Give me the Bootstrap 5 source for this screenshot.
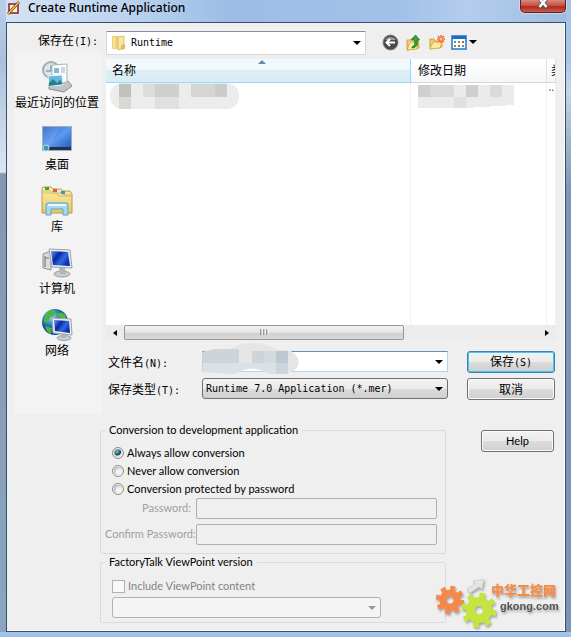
<!DOCTYPE html>
<html lang="zh-CN">
<head>
<meta charset="utf-8">
<meta name="viewport" content="width=device-width, initial-scale=1">
<title>Create Runtime Application</title>
<link href="https://cdn.jsdelivr.net/npm/bootstrap@5.3.0/dist/css/bootstrap.min.css" rel="stylesheet">
<style>
:root{--arrow:url("data:image/svg+xml,%3Csvg xmlns='http://www.w3.org/2000/svg' viewBox='0 0 8 4'%3E%3Cpath d='M0 0h8L4 4z'/%3E%3C/svg%3E");
--arrow-off:url("data:image/svg+xml,%3Csvg xmlns='http://www.w3.org/2000/svg' viewBox='0 0 8 4'%3E%3Cpath fill='%23999' d='M0 0h8L4 4z'/%3E%3C/svg%3E")}
body{font:12px/16px "Noto Sans","Noto Sans CJK SC",sans-serif;color:#000;background:#7f96b2}
.frame{padding:0 5px 5px 6px;background:
 linear-gradient(#a6c5e8,#9dc0e8) bottom/100% 5px no-repeat,
 linear-gradient(#b9cfe9 0,#a9c0dc 60px,#dbe6f1 172px,#8298b2 174px,#8ba5c0 100%) left/6px 100% no-repeat,
 linear-gradient(#a5c3e8 0,#a9c6e6 60px,#c3d5e8 90px,#8096b2 190px,#7e95b1 100%) right/5px 100% no-repeat,
 linear-gradient(90deg,#d4e3f6 0,#bdd4f0 120px,#9dbde6 230px,#a2c1e9 400px,#b4cdec 470px,#9dbbe0 100%)}
.titlebar{height:22px}
.titlebar h1{font-size:12px;line-height:16px}
.close-x{width:46px;height:13px;border:1px solid #5c2325;border-top:0;border-radius:0 0 5px 5px;background:linear-gradient(#d58c80,#c4493a 50%,#b0281c 55%,#cf5c48);box-shadow:0 0 0 1px #ffffff60}
.client{background:#efefef;border:1px solid #34506f;box-shadow:inset -1px -1px #fff}
.cjk{font-family:"Noto Sans CJK SC",sans-serif}
.mono{font:10px/16px "DejaVu Sans Mono",monospace}
.side{width:99px}
.lookin-label{height:29px;padding:9px 8px 0 0}
.places{width:88px;min-height:362px;margin-left:7px;padding:9px 2px 0 0;row-gap:13px;background:#f3f3f3}
.place{height:49px;line-height:17px;color:#000;white-space:nowrap}
.right-pane{padding:8px 9px 0 0}
.look{height:24px}
.look-select{height:24px;border:1px solid #d5d8df;border-top-color:#8a8e99;padding:0 24px 0 24px;background:#fff var(--arrow) right 4px center/8px 4px no-repeat;appearance:none}
.look svg{left:6px;top:4px}
.tools{width:190px;column-gap:6px;padding-bottom:2px}
.tool{width:17px;height:17px}
.files{height:266px;margin-top:4px;background:#fff}
.files table{table-layout:fixed}
.files th{height:23px;font-weight:400;padding:0 0 0 7px;background:linear-gradient(#fff,#f5f6f8);border-bottom:1px solid #d5d5d5;border-right:1px solid #dfe3e8;white-space:nowrap;overflow:hidden}
.files th.sorted{padding-left:6px;background:linear-gradient(#f2f9fc 45%,#dceff7 50%,#d8ecf6);border-bottom-color:#96d9f9;border-right-color:#96d9f9}
.files td{padding:0;border-right:1px solid #f0f0f0;vertical-align:top}
.files tr.entry{height:243px}
.c-date{width:136px}.c-type{width:9px}
.sort-mark{left:50%;top:1px}
.scroll{height:15px;background:#ececec}
.scroll button{width:18px;height:15px}
.thumb{width:280px;border:1px solid #979797;border-radius:2px;background:linear-gradient(#f4f4f4,#e3e3e3 50%,#cfcfcf 55%,#d8d8d8)}
.fields{display:grid;grid-template-columns:96px 1fr 88px;row-gap:5px;padding:11px 1px 0 0}
.fields label{padding:3px 0 0 2px;white-space:nowrap}
.field{height:21px;margin-right:19px}
.field input{min-width:0}
.name-field{border:1px solid #b7d5ea;border-top-color:#5c93bf;background:#fff}
.name-field button{width:17px;background:var(--arrow) center/8px 4px no-repeat}
.smudge{left:0;top:-9px}
.win-select{height:21px;border:1px solid #707070;border-radius:3px;padding:0 20px 0 3px;appearance:none;background:var(--arrow) right 4px center/8px 4px no-repeat,linear-gradient(#f2f2f2,#ebebeb 50%,#dcdcdc 52%,#cfcfcf)}
.win-select:disabled{border-color:#adb2b5;color:#838383;opacity:1;background:var(--arrow-off) right 4px center/8px 4px no-repeat,#f4f4f4}
.win-btn{height:22px;border:1px solid #707070;border-radius:3px;color:#000;background:linear-gradient(#f3f3f3,#ebebeb 50%,#dcdcdc 52%,#cfcfcf);box-shadow:inset 0 0 0 1px #fcfcfc;padding:0}
.win-btn.primary{border-color:#3c7fb1;box-shadow:inset 0 0 0 1px #48c8ee}
.lower{font:11px/16px Lato,"Liberation Sans",sans-serif;padding:8px 11px 7px 93px}
.lower .groups{max-width:348px}
.help-btn{width:73px;margin:8px 0 0 35px}
.box{border:1px solid #dadada;border-radius:2px;min-width:0}
.box legend{font-size:11px;line-height:16px;width:auto;margin:0;padding:0 4px}
.box-a{padding:6px 8px 8px 4px}
.box-b{padding:7px 8px 4px 4px}
.opt{height:18px;gap:3px;padding-left:7px}
.opt input,.check input{appearance:none;width:12px;height:12px;margin:0;border:1px solid #8e8f8f;background:#f4f4f4;box-shadow:inset 0 0 0 1px #f4f4f4,inset 1px 1px 2px 1px #aaa}
.opt input{border-radius:50%}
.opt input:checked{background:radial-gradient(circle at 45% 40%,#6fd0dd 0,#15687c 2px,#0d3c50 3px,#dfe8ec 4px)}
.check input{width:13px;height:13px;border-color:#b1b1b1;box-shadow:none;background:#f9f9f9}
.check{height:18px;gap:3px;padding-left:7px;color:#838383}
.pass{display:grid;grid-template-columns:86px 1fr;column-gap:5px;row-gap:5px;color:#a0a0a0}
.pass label{padding-top:2px;white-space:nowrap}
.pass input{height:21px;border:1px solid #afafaf;border-radius:2px;background:#efefef;min-width:0}
.vp-select{width:269px;margin:2px 0 0 7px}
.watermark{right:6px;bottom:3px;width:132px;pointer-events:none}
</style>
</head>
<body>
<div class="frame min-vh-100 d-flex flex-column position-relative">
  <header class="titlebar d-flex align-items-start">
    <svg class="me-2" width="14" height="16" viewBox="0 0 14 16" aria-hidden="true"><rect x="3" y="4" width="9" height="9" fill="#fff6d8" stroke="#9b2432" stroke-width="1.600"/><path d="M2 14 13 2" stroke="#5b3c20" stroke-width="2.600"/><path d="M2 14 13 2" stroke="#f1c928" stroke-width="1.600"/></svg>
    <h1 class="m-0 flex-grow-1">Create Runtime Application</h1>
    <button class="close-x p-0 d-flex justify-content-center" type="button" aria-label="Close"><svg width="14" height="9" viewBox="0 0 14 9"><path d="M3-2 11 8M11-2 3 8" stroke="#555" stroke-width="4"/><path d="M3-2 10.500 7M11-2 3.500 7" stroke="#fff" stroke-width="2.500"/></svg></button>
  </header>

  <main class="client flex-grow-1">
    <div class="d-flex">
      <div class="side flex-shrink-0">
        <div class="lookin-label text-end text-nowrap"><label for="lookin" class="cjk">保存在<span class="mono">(I):</span></label></div>
        <nav class="places d-flex flex-column align-items-center cjk">
          <a href="#" class="place text-decoration-none d-flex flex-column align-items-center">
            <svg width="32" height="32" viewBox="0 0 32 32"><circle cx="10" cy="9" r="8" fill="#dce6ea" stroke="#9db0b8" stroke-width="2"/><path d="M10 4v6H5" stroke="#5d8290" fill="none"/><path d="M8 22 27 20l4 5-8 6-15-3z" fill="#bfc4c7" stroke="#8b8f92"/><path d="M11 4 26 3v18l-15 2z" fill="#fafcfd" stroke="#a8b5bc"/><path d="M13 7h5v5h-5z" fill="#83b9dc"/><path d="M20 7h4M20 9h4M20 11h4" stroke="#9eb3bf"/><path d="m7 15 14-1 1 10-14 1z" fill="#68b9e0" stroke="#e9f2f6"/><path d="m8 22 4-4 4 4 3-3 3 4-14 2z" fill="#277f8c"/></svg>
            <span>最近访问的位置</span></a>
          <a href="#" class="place text-decoration-none d-flex flex-column align-items-center">
            <svg width="32" height="32" viewBox="0 0 32 32"><defs><linearGradient id="d" x2="1" y2="1"><stop stop-color="#245fc8"/><stop offset=".5" stop-color="#5c9aef"/><stop offset="1" stop-color="#1b50bb"/></linearGradient></defs><rect x="1.500" y="3.500" width="29" height="24" fill="url(#d)" stroke="#a6adb6"/><path d="M2 4h17L8 24H2z" fill="#fff" opacity=".12"/><path d="M2 24h28v3H2z" fill="#1c3351"/><circle cx="5" cy="25" r="3" fill="#3c97b7" stroke="#b3dce4"/></svg>
            <span>桌面</span></a>
          <a href="#" class="place text-decoration-none d-flex flex-column align-items-center">
            <svg width="32" height="32" viewBox="0 0 32 32"><defs><linearGradient id="l" x2="0" y2="1"><stop stop-color="#fff1ae"/><stop offset="1" stop-color="#e6c763"/></linearGradient></defs><path d="M1 4q0-2 2-2h7l2 2h8l2 2h7l2 3v19H1z" fill="url(#l)" stroke="#c0994a"/><path d="M2 8h13l3 3h12M2 6h9l2 2h8l2 2h7" fill="none" stroke="#d0af5d" stroke-width=".8"/><path d="M4 2h4v3H4z" fill="#30a843"/><path d="M12 4h4v3h-4z" fill="#d26449"/><path d="M20 6h4v3h-4z" fill="#3a91ce"/><path d="M5 30V20q0-2 2-2h18q2 0 2 2v10h-5v-6H10v6z" fill="#a4d9ed" stroke="#5aa6c8"/><path d="M7 20h18" stroke="#e9f9ff" stroke-width="2"/></svg>
            <span>库</span></a>
          <a href="#" class="place text-decoration-none d-flex flex-column align-items-center">
            <svg width="32" height="32" viewBox="0 0 32 32"><defs><linearGradient id="s" x2="1" y2=".6"><stop stop-color="#6d96ee"/><stop offset=".4" stop-color="#0828a4"/><stop offset=".7" stop-color="#3169df"/><stop offset="1" stop-color="#0c2ca8"/></linearGradient></defs><path d="m2 7 8-3v19l-8-2z" fill="#d9dcdd" stroke="#8b9194"/><path d="M4 9v11M4 11h4" stroke="#686e72"/><ellipse cx="21" cy="27" rx="8" ry="3" fill="#c9ced1" stroke="#9aa0a4"/><path d="M18 21h6l1 6h-6z" fill="#aeb6bb"/><path d="m8 2 21 1 2 18-20-1z" fill="#e9ecef" stroke="#9ba3aa"/><path d="m10 4 17 1 2 14-17-1z" fill="url(#s)"/></svg>
            <span>计算机</span></a>
          <a href="#" class="place text-decoration-none d-flex flex-column align-items-center">
            <svg width="32" height="32" viewBox="0 0 32 32"><defs><radialGradient id="g" cx=".35" cy=".3"><stop stop-color="#b5ebff"/><stop offset=".5" stop-color="#3791d5"/><stop offset="1" stop-color="#0a4790"/></radialGradient></defs><circle cx="14" cy="13" r="13" fill="url(#g)"/><path d="M4 5q6-6 11-3l-2 5-4 2-2 5-4-1zM15 5q7-4 10 2l1 5-6-2zM4 17l7 2-1 6q-5-2-6-8z" fill="#4bb545"/><ellipse cx="23" cy="29" rx="7" ry="2.500" fill="#c9ced1" stroke="#9aa0a4"/><path d="M20 24h5v5h-5z" fill="#aeb6bb"/><path d="m11 9 19 1 1 16-19-2z" fill="#e9ecef" stroke="#9ba3aa"/><path d="m13 11 15 1 1 12-15-2z" fill="url(#s)"/></svg>
            <span>网络</span></a>
        </nav>
      </div>

      <div class="right-pane flex-grow-1 overflow-hidden">
        <div class="d-flex align-items-center">
          <div class="look position-relative flex-grow-1">
            <select id="lookin" class="look-select mono w-100 rounded-0"><option>Runtime</option></select>
            <svg class="position-absolute" width="14" height="16" viewBox="0 0 14 16"><path d="M0 1h6v13H0z" fill="#ecd27a"/><path d="m6 2 6-1v12l-6 2z" fill="#f8e6a0" stroke="#d7b656" stroke-width=".8"/><path d="M2 2v11" stroke="#fff2bd"/><path d="m9 10 4-1v5l-4 1z" fill="#e1c05c"/></svg>
          </div>
          <div class="tools d-flex align-items-center ps-3">
            <button class="tool btn p-0 border-0 d-flex" type="button" aria-label="Back"><svg width="17" height="17" viewBox="0 0 17 17"><circle cx="8.500" cy="8.500" r="7.500" fill="#4a4a4a" stroke="#858585"/><path d="M3 6a6.500 6.500 0 0 1 11 0z" fill="#999"/><path d="M13 8.500H5M8 5 4.500 8.500 8 12" fill="none" stroke="#fff" stroke-width="2"/></svg></button>
            <button class="tool btn p-0 border-0 d-flex" type="button" aria-label="Up"><svg width="17" height="17" viewBox="0 0 17 17"><path d="M2 6h4l1-2h6l1 10-12 2z" fill="#f2d77b" stroke="#c69f40"/><path d="m2 16 3-8h8l-1 7z" fill="#ffeb9f" stroke="#d0ad4b"/><path d="M7 13q4-2 2.500-7H6.500L10.500 1l4 5H12q2 7-5 8z" fill="#36a638" stroke="#19751e" stroke-width=".8"/></svg></button>
            <button class="tool btn p-0 border-0 d-flex" type="button" aria-label="New folder"><svg width="17" height="17" viewBox="0 0 17 17"><path d="M2 5h4l1 2h7v6L2 15z" fill="#f0d070" stroke="#c9a345"/><path d="m2 15 3-7h9l-2 6z" fill="#ffe99b" stroke="#d6b452"/><path d="M13 1v8M9 5h8M10 2l6 6M16 2l-6 6" stroke="#f3673f" stroke-width="1.500"/><circle cx="13" cy="5" r="1.500" fill="#ffd65a"/></svg></button>
            <button class="btn p-0 border-0 d-flex" type="button" aria-label="View"><svg width="26" height="17" viewBox="0 0 26 17"><rect x="1" y="2" width="14" height="13" fill="#fff" stroke="#2575c8" stroke-width="1.500"/><path d="M1 2h14v3H1z" fill="#1e6cc3"/><path d="M3 7h2v2H3zM11 11h2v2h-2z" fill="#5787b7"/><path d="M7 7h2v2H7zM3 11h2v2H3z" fill="#57a06f"/><path d="M11 7h2v2h-2zM7 11h2v2H7z" fill="#b45c48"/><path d="M18 6h8l-4 4z"/></svg></button>
          </div>
        </div>

        <div class="files overflow-hidden">
          <table class="w-100 cjk">
            <colgroup><col><col class="c-date"><col class="c-type"></colgroup>
            <thead><tr>
              <th class="sorted position-relative" scope="col">名称<svg class="sort-mark position-absolute" width="8" height="4" viewBox="0 0 8 4"><path d="M0 4 4 0l4 4z" fill="#5d8eae"/></svg></th>
              <th scope="col">修改日期</th>
              <th scope="col" class="ps-1">类型</th>
            </tr></thead>
            <tbody><tr class="entry">
              <td><svg class="d-block" width="134" height="26" viewBox="0 0 134 26"><defs><clipPath id="m"><rect x="4" y="0" width="129" height="26" rx="12"/></clipPath></defs><g clip-path="url(#m)" shape-rendering="crispEdges"><path fill="#ececec" d="M0 0h134v26H0z"/><path fill="#c2c1b9" d="M13 1h12v13H13z"/><path fill="#d8d8d5" d="M13 14h12v12H13z"/><path fill="#dcdcdc" d="M37 1h12v13H37z"/><path fill="#cfcfcf" d="M49 1h24v13H49z"/><path fill="#e1e0df" d="M49 14h24v12H49z"/><path fill="#d7d4d4" d="M85 1h24v13H85z"/><path fill="#cccccf" d="M109 1h12v13h-12z"/></g></svg></td>
              <td><svg class="d-block" width="104" height="26" viewBox="0 0 104 26" shape-rendering="crispEdges"><path fill="#ebebeb" d="M7 2h96v20l-48 3H7z"/><path fill="#cfcfcf" d="M7 2h12v12H7zM55 2h12v12H55z"/><path fill="#dadada" d="M19 2h24v12H19zM79 2h12v12H79z"/><path fill="#e0e0e0" d="M43 14h12v11H43z"/></svg></td>
              <td class="text-nowrap overflow-hidden"><svg class="d-block" width="9" height="16" viewBox="0 0 9 16"><path d="M2 7h4v2" fill="none" stroke="#555" stroke-dasharray="2 1"/></svg></td>
            </tr></tbody>
          </table>
        </div>
        <div class="scroll d-flex justify-content-between">
          <div class="d-flex">
            <button class="btn p-0 border-0 rounded-0 d-flex align-items-center justify-content-center" type="button" aria-label="Scroll left"><svg width="4" height="6" viewBox="0 0 4 6"><path d="M4 0v6L0 3z"/></svg></button>
            <div class="thumb d-flex align-items-center justify-content-center"><svg width="9" height="7" viewBox="0 0 9 7"><path d="M1 0v6M4 0v6M7 0v6" stroke="#555"/><path d="M2 0v6M5 0v6M8 0v6" stroke="#fff"/></svg></div>
          </div>
          <button class="btn p-0 border-0 rounded-0 d-flex align-items-center justify-content-center" type="button" aria-label="Scroll right"><svg width="4" height="6" viewBox="0 0 4 6"><path d="M0 0v6l4-3z"/></svg></button>
        </div>

        <div class="fields cjk">
          <label for="fname">文件名<span class="mono">(N):</span></label>
          <div class="field name-field d-flex position-relative">
            <input id="fname" type="text" class="border-0 flex-grow-1 bg-transparent p-0 ps-1 mono">
            <button class="btn border-0 p-0 rounded-0" type="button" aria-label="File name list"></button>
            <svg class="smudge position-absolute" width="98" height="32" viewBox="0 0 98 32"><defs><clipPath id="b"><path d="M0 9 12 6h14Q48-6 72 6l16 2q13 9 4 19l-9 4H66q-17-11-34 0l-32-2z"/></clipPath></defs><g clip-path="url(#b)" shape-rendering="crispEdges"><path fill="#e3e5e6" d="M0 0h98v32H0z"/><path fill="#cdd4da" d="M0 6h36v14H0zM49 8h12v12H49z"/><path fill="#dae2e9" d="M0 20h85v12H0z"/><path fill="#d5dadd" d="M61 8h12v12H61z"/><path fill="#bdc8d0" d="M73 8h12v12H73z"/><path fill="#cbd5dd" d="M73 20h12v12H73z"/></g></svg>
          </div>
          <button class="win-btn primary cjk" type="button">保存<span class="mono">(S)</span></button>
          <label for="ftype">保存类型<span class="mono">(T):</span></label>
          <div class="field"><select id="ftype" class="win-select mono w-100 d-block"><option>Runtime 7.0 Application (*.mer)</option></select></div>
          <button class="win-btn cjk" type="button">取消</button>
        </div>
      </div>
    </div>

    <div class="lower d-flex align-items-start">
      <div class="groups flex-grow-1">
        <fieldset class="box box-a">
          <legend class="float-none">Conversion to development application</legend>
          <div class="opt d-flex align-items-center"><input type="radio" name="conv" id="c1" checked><label for="c1">Always allow conversion</label></div>
          <div class="opt d-flex align-items-center"><input type="radio" name="conv" id="c2"><label for="c2">Never allow conversion</label></div>
          <div class="opt d-flex align-items-center"><input type="radio" name="conv" id="c3"><label for="c3">Conversion protected by password</label></div>
          <div class="pass text-end">
            <label for="p1">Password:</label><input type="password" id="p1" disabled>
            <label for="p2">Confirm Password:</label><input type="password" id="p2" disabled>
          </div>
        </fieldset>
        <fieldset class="box box-b">
          <legend class="float-none">FactoryTalk ViewPoint version</legend>
          <div class="check d-flex align-items-center"><input type="checkbox" id="vp" disabled><label for="vp">Include ViewPoint content</label></div>
          <select class="win-select vp-select d-block" aria-label="ViewPoint version" disabled><option></option></select>
        </fieldset>
      </div>
      <button class="win-btn help-btn flex-shrink-0" type="button">Help</button>
    </div>
  </main>

  <svg class="watermark position-absolute" height="58" viewBox="0 0 132 58" role="img" aria-label="gkong.com">
    <defs><filter id="sh" x="-20%" y="-20%" width="150%" height="150%"><feDropShadow dx="1" dy="2" stdDeviation="1" flood-color="#555" flood-opacity=".5"/></filter></defs>
    <g filter="url(#sh)">
      <path d="m34 13 8-5-2-3 11-2-2 10-3-2-9 6z" fill="#e4e4e4" stroke="#c6c6c6" stroke-width=".6"/>
      <g fill="none" stroke="#f5894a"><circle cx="17" cy="24" r="7" stroke-width="7"/><circle cx="17" cy="24" r="12" stroke-width="4.500" stroke-dasharray="4.700 4.720"/></g>
      <g fill="none" stroke="#c5e43c"><circle cx="46" cy="34" r="8.500" stroke-width="9"/><circle cx="46" cy="34" r="15" stroke-width="5" stroke-dasharray="5.500 6.280"/></g>
    </g>
    <g filter="url(#sh)">
      <text x="58" y="19" font-family="Noto Sans CJK SC, sans-serif" font-size="13" font-weight="900" fill="#f58b42">中华工控网</text>
      <text x="67" y="34" font-family="Liberation Sans, sans-serif" font-size="11" font-weight="700" fill="#555">gkong.com</text>
    </g>
  </svg>
</div>
<script src="https://cdn.jsdelivr.net/npm/bootstrap@5.3.0/dist/js/bootstrap.bundle.min.js"></script>
</body>
</html>
